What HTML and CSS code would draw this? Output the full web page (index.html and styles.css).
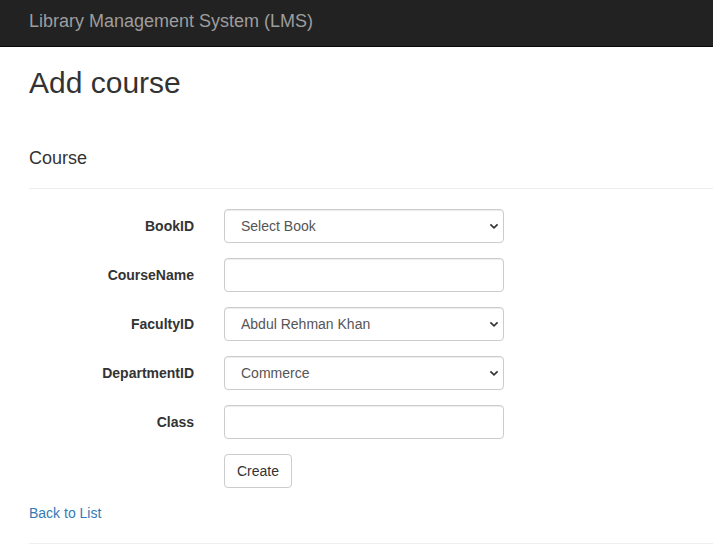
FILE: index.html
```html
<!DOCTYPE html>
<html lang="en">
<head>
<meta charset="utf-8">
<title>Add course - Library Management System</title>
<link rel="stylesheet" href="styles.css">
</head>
<body>
<header class="navbar">
  <a class="brand" href="#">Library Management System (LMS)</a>
</header>
<main class="content">
  <h2 class="page-title">Add course</h2>
  <form class="form">
    <h4 class="section-title">Course</h4>
    <hr class="rule">
    <div class="form-grid">
      <label class="control-label" for="book">BookID</label>
      <div class="select-wrap">
        <select id="book" class="form-control select">
          <option>Select Book</option>
        </select>
        <svg class="chevron" width="10" height="7" viewBox="0 0 10 7"><path d="M1.4 1.4 L5 4.8 L8.6 1.4" fill="none" stroke="#333" stroke-width="1.7"/></svg>
      </div>

      <label class="control-label" for="cname">CourseName</label>
      <input id="cname" class="form-control" type="text">

      <label class="control-label" for="faculty">FacultyID</label>
      <div class="select-wrap">
        <select id="faculty" class="form-control select">
          <option>Abdul Rehman Khan</option>
        </select>
        <svg class="chevron" width="10" height="7" viewBox="0 0 10 7"><path d="M1.4 1.4 L5 4.8 L8.6 1.4" fill="none" stroke="#333" stroke-width="1.7"/></svg>
      </div>

      <label class="control-label" for="dept">DepartmentID</label>
      <div class="select-wrap">
        <select id="dept" class="form-control select">
          <option>Commerce</option>
        </select>
        <svg class="chevron" width="10" height="7" viewBox="0 0 10 7"><path d="M1.4 1.4 L5 4.8 L8.6 1.4" fill="none" stroke="#333" stroke-width="1.7"/></svg>
      </div>

      <label class="control-label" for="cls">Class</label>
      <input id="cls" class="form-control" type="text">

      <span></span>
      <div><button type="button" class="btn">Create</button></div>
    </div>
  </form>
  <div class="back"><a href="#" class="link">Back to List</a></div>
  <hr class="rule footer-rule">
</main>
</body>
</html>
```

FILE: styles.css
```css
* { box-sizing: border-box; }

body {
  margin: 0;
  font-family: "Liberation Sans", Arial, Helvetica, sans-serif;
  font-size: 14px;
  line-height: 1.42857;
  color: #333;
  background: #fff;
}

.navbar {
  height: 47px;
  background: #222;
  border-bottom: 1px solid #080808;
  padding-left: 29px;
}

.brand {
  display: block;
  font-size: 18px;
  line-height: 43px;
  color: #9d9d9d;
  text-decoration: none;
}

.content {
  padding: 0 0 0 29px;
}

.page-title {
  margin: 19px 0 0;
  font-size: 30px;
  font-weight: 500;
  line-height: 1.1;
}

.section-title {
  margin: 50px 0 0;
  font-size: 18px;
  font-weight: 500;
  line-height: 1.1;
}

.rule {
  margin: 19px 0 0;
  border: 0;
  border-top: 1px solid #eee;
  height: 0;
}

.form-grid {
  display: grid;
  grid-template-columns: 165px 280px;
  column-gap: 30px;
  row-gap: 15px;
  margin-top: 20px;
  align-items: center;
}

.control-label {
  font-weight: bold;
  text-align: right;
  padding-top: 2px;
}

.form-control {
  display: block;
  width: 280px;
  height: 34px;
  padding: 7px 12px 5px;
  font-family: inherit;
  font-size: 14px;
  line-height: 1.42857;
  color: #555;
  background: #fff;
  border: 1px solid #ccc;
  border-radius: 4px;
  box-shadow: inset 0 1px 1px rgba(0,0,0,.075);
}

.select-wrap {
  position: relative;
  width: 280px;
}

.select {
  appearance: none;
  -webkit-appearance: none;
  padding-left: 16px;
}

.chevron {
  position: absolute;
  right: 5px;
  top: 14px;
  pointer-events: none;
}

.btn {
  height: 34px;
  padding: 7px 12px 5px;
  font-family: inherit;
  font-size: 14px;
  line-height: 1.42857;
  color: #333;
  background: #fff;
  border: 1px solid #ccc;
  border-radius: 4px;
}

.back {
  margin-top: 16px;
}

.link {
  color: #337ab7;
  text-decoration: none;
}

.footer-rule {
  margin-top: 19px;
}
```
